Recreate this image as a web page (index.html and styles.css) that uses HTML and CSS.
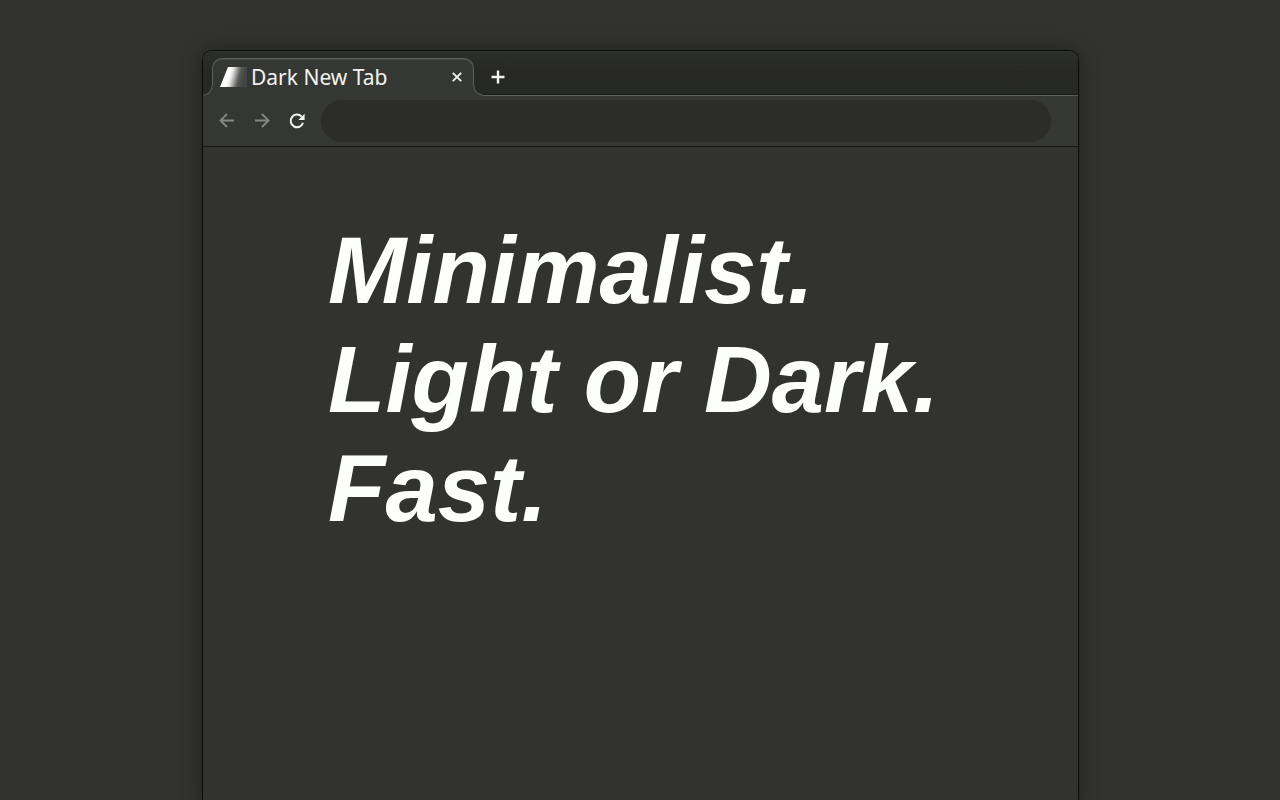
FILE: index.html
```html
<!DOCTYPE html>
<html lang="en">
<head>
<meta charset="utf-8">
<title>Dark New Tab</title>
<link rel="stylesheet" href="styles.css">
</head>
<body>
<main class="window">
  <div class="tab-strip">
    <div class="tab">
      <svg class="favicon" width="27" height="20" viewBox="0 0 27 20" aria-hidden="true">
        <defs>
          <linearGradient id="fade" gradientUnits="userSpaceOnUse" x1="9" y1="7" x2="24" y2="11">
            <stop offset="0" stop-color="#fff"/>
            <stop offset=".2" stop-color="#e4e5e3"/>
            <stop offset=".45" stop-color="#999a98"/>
            <stop offset=".68" stop-color="#555754"/>
            <stop offset="1" stop-color="#434542"/>
          </linearGradient>
        </defs>
        <path d="M8 0H27V20H0z" fill="url(#fade)"/>
      </svg>
      <span class="tab-title">Dark New Tab</span>
      <button class="icon-button close" type="button" aria-label="Close tab">
        <svg width="10" height="10" viewBox="0 0 10 10"><path d="M.8 .8l8.400 8.400M9.200 .8l-8.400 8.400" stroke="#f2f4f0" stroke-width="1.900"/></svg>
      </button>
    </div>
    <button class="icon-button add" type="button" aria-label="New tab">
      <svg width="14" height="14" viewBox="0 0 14 14"><path d="M7 .5v13M.5 7h13" stroke="#f2f4f0" stroke-width="2.400"/></svg>
    </button>
  </div>
  <div class="toolbar">
    <button class="icon-button" type="button" aria-label="Back">
      <svg width="16" height="16" viewBox="0 0 16 16"><path d="M15 7.500H2M8 1L1.500 7.500 8 14" fill="none" stroke="#858783" stroke-width="1.800"/></svg>
    </button>
    <button class="icon-button" type="button" aria-label="Forward">
      <svg width="16" height="16" viewBox="0 0 16 16"><path d="M1 7.500h13M8 1l6.500 6.500L8 14" fill="none" stroke="#858783" stroke-width="1.800"/></svg>
    </button>
    <button class="icon-button" type="button" aria-label="Reload">
      <svg width="16" height="16" viewBox="0 0 16 16"><path d="M14 9.800A6.300 6.300 0 1 1 12.600 3.600" fill="none" stroke="#f2f4f0" stroke-width="2"/><path d="M15.600 .8v6.200H9.400z" fill="#f2f4f0"/></svg>
    </button>
    <input class="address" type="text" aria-label="Address">
  </div>
  <h1 class="headline">Minimalist.<br>Light or Dark.<br>Fast.</h1>
</main>
</body>
</html>
```
FILE: styles.css
```css
* {
  box-sizing: border-box;
}

body {
  margin: 0;
  min-height: 100vh;
  padding: 50px 201px 0 202px;
  display: flex;
  background: #323230;
  overflow: hidden;
}

.window {
  flex: 1;
  border: 1px solid #0b0c0a;
  border-bottom: 0;
  border-radius: 10px 10px 0 0;
  background: #323230;
  box-shadow: 0 2px 18px rgba(15, 24, 18, 0.6);
}

.tab-strip {
  display: flex;
  align-items: flex-end;
  height: 44px;
  padding-left: 9px;
  border-radius: 9px 9px 0 0;
  background: linear-gradient(#2c2e2b, #272825 50%, #262825);
  box-shadow: inset 0 1px #343633, inset 0 -1px #1b1c1a;
}

.tab {
  position: relative;
  z-index: 1;
  display: flex;
  align-items: center;
  width: 262px;
  height: 38px;
  margin-bottom: -1px;
  padding: 0 11px 1px 7px;
  border: 1px solid #5c5f5b;
  border-bottom: 0;
  border-radius: 10px 10px 0 0;
  background: #353734;
  box-shadow: inset 0 1px #474946;
}

.tab::before,
.tab::after {
  content: "";
  position: absolute;
  bottom: 0;
  width: 10px;
  height: 10px;
}

.tab::before {
  right: 100%;
  background: radial-gradient(circle at 0 0, transparent 8px, #5c5f5b 9px, #5c5f5b 9px, #353734 10px);
}

.tab::after {
  left: 100%;
  background: radial-gradient(circle at 100% 0, transparent 8px, #5c5f5b 9px, #5c5f5b 9px, #353734 10px);
}

.tab-title {
  flex: 1;
  margin-left: 4px;
  color: #f2f4f2;
  font: 21px/28px "Noto Sans", sans-serif;
  white-space: nowrap;
}

.icon-button {
  display: flex;
  padding: 0;
  border: 0;
  background: none;
}

.add {
  margin: 0 0 11px 17px;
}

.toolbar {
  display: flex;
  align-items: center;
  gap: 19px;
  height: 52px;
  padding: 0 27px 0 16px;
  border-top: 1px solid #5c5f5b;
  border-bottom: 1px solid #171816;
  background: #353734;
}

.address {
  flex: 1;
  min-width: 0;
  height: 42px;
  margin-left: -3px;
  padding: 0 20px;
  border: 0;
  border-radius: 21px;
  outline: 0;
  background: #2c2c2a;
  color: #f2f4f2;
  font: 18px "Noto Sans", sans-serif;
}

.headline {
  margin: 0;
  padding: 69px 24px 0 125px;
  color: #fdfffc;
  font: italic bold 94px/109px "Liberation Sans", Arial, sans-serif;
}
```
